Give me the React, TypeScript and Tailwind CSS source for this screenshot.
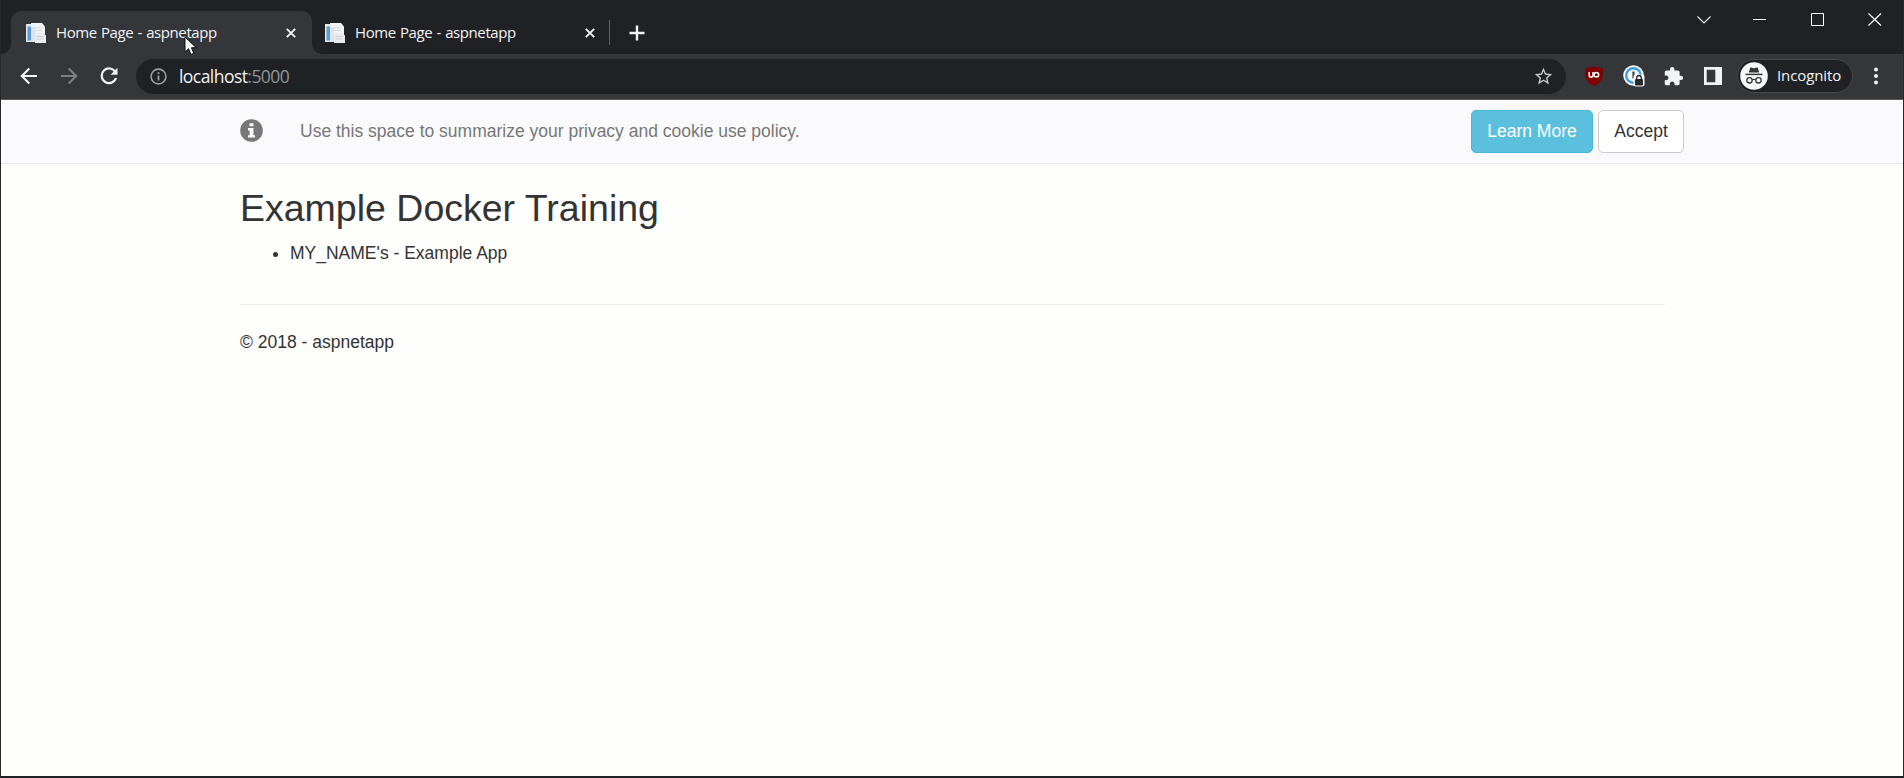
import React from "react";

function Favicon() {
  return (
    <svg width="20" height="20" viewBox="0 0 20 20" className="shrink-0">
      <path d="M0 1h5v18H0z" fill="#e4e9ee" />
      <path d="M1.500 3.500h4v14h-4z" fill="#5b9bd5" />
      <path d="M5 0h11l3 3.500V13H5z" fill="#f1f3f5" />
      <path d="M5 4h4v15H5z" fill="#dde5ec" />
      <path d="M8 5h8M8 7.500h8" stroke="#d5dbe1" strokeWidth="1" />
      <path d="M9 10h8l3 2.500V20H9z" fill="#e9ebee" />
      <path d="M10.500 13.500h7M10.500 16h7" stroke="#cdd3da" strokeWidth="1" />
    </svg>
  );
}

function CloseGlyph() {
  return (
    <svg width="10" height="10" viewBox="0 0 10 10" className="shrink-0">
      <path d="M.8.8l8.400 8.400M9.200.8L.8 9.200" stroke="#f1f3f4" strokeWidth="1.900" />
    </svg>
  );
}

function TabContent() {
  return (
    <>
      <Favicon />
      <span className="mb-[2px] ml-[10px] w-[230px] whitespace-nowrap text-[15px] leading-5 tracking-[-0.42px] text-[#f1f3f4] [word-spacing:0.8px]">
        Home Page - aspnetapp
      </span>
      <CloseGlyph />
    </>
  );
}

function TabStrip() {
  return (
    <div className="flex h-[54px] items-start justify-between bg-[#202124]">
      <div className="flex">
        <div className="flex h-[54px] items-end">
          <svg width="10" height="10" viewBox="0 0 10 10">
            <path d="M10 0v10H0A10 10 0 0 0 10 0z" fill="#35363a" />
          </svg>
          <div className="flex h-[43px] w-[301px] items-center rounded-t-[10px] bg-[#35363a] pl-[15px]">
            <TabContent />
          </div>
          <svg width="10" height="10" viewBox="0 0 10 10">
            <path d="M0 0v10h10A10 10 0 0 1 0 0z" fill="#35363a" />
          </svg>
        </div>
        <div className="mt-[11px] flex h-[43px] items-center pl-[3px]">
          <TabContent />
          <div className="ml-[14px] h-[25px] w-px bg-[#5f6165]" />
          <svg width="16" height="16" viewBox="0 0 16 16" className="ml-[19px]">
            <path d="M8 .5v15M.5 8h15" stroke="#f1f3f4" strokeWidth="2.400" />
          </svg>
        </div>
      </div>
      <div className="flex pr-[21px] pt-[12px]">
        <svg width="14" height="14" viewBox="0 0 14 14" className="mr-[42px]">
          <path d="M.5 4.500L7 11l6.500-6.500" fill="none" stroke="#e8eaed" strokeWidth="1.100" />
        </svg>
        <svg width="14" height="14" viewBox="0 0 14 14" className="mr-[44px]">
          <path d="M0 7.500h13" stroke="#fff" />
        </svg>
        <svg width="14" height="14" viewBox="0 0 14 14" className="mr-[43px]">
          <path d="M.5 1.500h12v12H.5z" fill="none" stroke="#fff" />
        </svg>
        <svg width="14" height="14" viewBox="0 0 14 14">
          <path d="M.5 1.500l12.500 12M13 1.500l-12.500 12" stroke="#fff" strokeWidth="1.200" />
        </svg>
      </div>
    </div>
  );
}

function Toolbar() {
  return (
    <div className="flex h-[46px] items-center border-b border-[#5a5a5d] bg-[#35363a] pb-[1px] pl-[19px]">
      <svg width="18" height="18" viewBox="0 0 18 18">
        <path d="M17 9H2M9.300 1.500L1.800 9l7.500 7.500" fill="none" stroke="#f1f3f4" strokeWidth="2.100" />
      </svg>
      <svg width="18" height="18" viewBox="0 0 18 18" className="ml-[22px]">
        <path d="M1 9h15M8.700 1.500L16.200 9l-7.500 7.500" fill="none" stroke="#7d7e82" strokeWidth="2.100" />
      </svg>
      <svg width="18" height="18" viewBox="0 0 18 18" className="ml-[22px]">
        <path d="M15.300 5A7.300 7.300 0 1 0 16 11" fill="none" stroke="#f1f3f4" strokeWidth="2.200" />
        <path d="M17.500.8v7h-7z" fill="#f1f3f4" />
      </svg>
      <div className="ml-[18px] mt-[1px] flex h-[35px] w-[1430px] items-center rounded-full bg-[#202124] pb-[1px] pl-[14px] pr-[12px]">
        <svg width="17" height="17" viewBox="0 0 17 17">
          <circle cx="8.500" cy="8.500" r="7.400" fill="none" stroke="#9aa0a6" strokeWidth="1.600" />
          <path d="M8.500 7.400v5M8.500 4.200v1.900" stroke="#9aa0a6" strokeWidth="1.800" />
        </svg>
        <div className="ml-[12px] flex-1 whitespace-nowrap text-[17.500px] leading-6 tracking-[-0.55px] text-[#f1f3f4]">
          localhost<span className="text-[#8f9498]">:5000</span>
        </div>
        <svg width="21" height="21" viewBox="0 0 24 24">
          <path
            d="M22 9.240l-7.190-.62L12 2 9.190 8.630 2 9.240l5.460 4.730L5.820 21 12 17.270 18.180 21l-1.630-7.030zM12 15.400l-3.760 2.270 1-4.280-3.320-2.880 4.380-.38L12 6.100l1.710 4.040 4.380.38-3.320 2.880 1 4.280z"
            fill="#c4c7cb"
          />
        </svg>
      </div>
      <svg width="18" height="20" viewBox="0 0 18 20" className="ml-[19px] shrink-0">
        <path d="M9 0c2.500 1.500 5.500 2 8.800 2.200V9c0 5-3.500 8.500-8.800 11C3.700 17.500.2 14 .2 9V2.200C3.500 2 6.500 1.500 9 0z" fill="#800000" />
        <path d="M4.200 6v3.200a1.900 1.900 0 0 0 3.800 0V6" fill="none" stroke="#fff" strokeWidth="1.500" />
        <circle cx="11.400" cy="8.700" r="2.300" fill="none" stroke="#fff" strokeWidth="1.500" />
      </svg>
      <svg width="22" height="22" viewBox="0 0 22 22" className="ml-[20px] shrink-0">
        <circle cx="10.500" cy="10.500" r="10.300" fill="#f8f9fa" />
        <circle cx="10.500" cy="10.500" r="7.300" fill="none" stroke="#3b9fe0" strokeWidth="2.400" />
        <path d="M10.500 6.500v7" stroke="#3c4043" strokeWidth="2.200" />
        <rect x="10.500" y="9.500" width="11" height="12" rx="2.500" fill="#f8f9fa" />
        <rect x="12" y="14" width="8" height="6.500" rx="1" fill="#27282b" />
        <path d="M13.700 14.500v-1.700a2.300 2.300 0 0 1 4.600 0v1.700" fill="none" stroke="#27282b" strokeWidth="1.300" />
      </svg>
      <svg width="21" height="21" viewBox="0 0 24 24" className="ml-[18px] shrink-0">
        <path
          d="M20.500 11H19V7c0-1.100-.9-2-2-2h-4V3.500a2.500 2.500 0 0 0-5 0V5H4c-1.100 0-1.990.9-1.990 2v3.800H3.500c1.490 0 2.700 1.210 2.700 2.700s-1.210 2.700-2.700 2.700H2V20c0 1.100.9 2 2 2h3.800v-1.500c0-1.490 1.210-2.700 2.700-2.700s2.700 1.210 2.700 2.700V22H17c1.100 0 2-.9 2-2v-4h1.500a2.500 2.500 0 0 0 0-5z"
          fill="#f1f3f4"
        />
      </svg>
      <svg width="18" height="18" viewBox="0 0 18 18" className="ml-[20px] shrink-0">
        <path d="M0 0h18v18H0zM2.700 2.700v12.600h8.600V2.700z" fill="#f1f3f4" fillRule="evenodd" />
      </svg>
      <div className="ml-[15px] flex h-[34px] w-[116px] shrink-0 items-center rounded-full border border-[#47484c] bg-[#202124] pl-[2px]">
        <svg width="28" height="28" viewBox="0 0 28 28" className="shrink-0">
          <circle cx="14" cy="14" r="13.800" fill="#f8f9fa" />
          <path d="M10.300 5.500c1.400 0 2.200.7 3.700.7s2.300-.7 3.700-.7l1.500 5H8.800z" fill="#35363a" />
          <path d="M5.500 12.400h17" stroke="#35363a" strokeWidth="1.500" />
          <circle cx="9.500" cy="18.300" r="2.700" fill="none" stroke="#35363a" strokeWidth="1.300" />
          <circle cx="18.500" cy="18.300" r="2.700" fill="none" stroke="#35363a" strokeWidth="1.300" />
          <path d="M12.200 17.800q1.800-1 3.600 0" fill="none" stroke="#35363a" strokeWidth="1.200" />
        </svg>
        <span className="mb-[2px] ml-[9px] text-[15px] leading-5 tracking-[-0.1px] text-[#f1f3f4]">Incognito</span>
      </div>
      <svg width="4" height="18" viewBox="0 0 4 18" className="ml-[21px] shrink-0">
        <circle cx="2" cy="2.500" r="2" fill="#f1f3f4" />
        <circle cx="2" cy="9" r="2" fill="#f1f3f4" />
        <circle cx="2" cy="15.500" r="2" fill="#f1f3f4" />
      </svg>
    </div>
  );
}

function CookieBanner() {
  return (
    <div className="flex h-[64px] items-center border-b border-[#e7e7e7] bg-[#fafafc] pb-[1px] pl-[239px] pr-[219px]">
      <svg width="23" height="23" viewBox="0 0 23 23" className="mb-[2px] shrink-0">
        <circle cx="11.500" cy="11.500" r="11.300" fill="#777" />
        <path d="M9.500 4.200h4v3h-4zM8 9h5.500v7.200H15v2.400H8v-2.400h1.600v-4.800H8z" fill="#fafafc" />
      </svg>
      <p className="ml-[37px] flex-1 whitespace-nowrap text-[17.500px] leading-[25px] text-[#777]">
        Use this space to summarize your privacy and cookie use policy.
      </p>
      <button className="h-[43px] w-[122px] rounded-[5px] border border-[#46b8da] bg-[#5bc0de] text-[17.500px] leading-[25px] text-white">
        Learn More
      </button>
      <button className="ml-[5px] h-[43px] w-[86px] rounded-[5px] border border-[#ccc] bg-white text-[17.500px] leading-[25px] text-[#333]">
        Accept
      </button>
    </div>
  );
}

export default function App() {
  return (
    <div className="relative flex h-[778px] w-[1904px] flex-col overflow-hidden border-x border-[#27282b] bg-[#fefefd] font-['Open_Sans','Noto_Sans',sans-serif]">
      <TabStrip />
      <Toolbar />
      <div className="flex flex-1 flex-col font-['Liberation_Sans',Arial,sans-serif] text-[17.500px] leading-[25px] text-[#333]">
        <CookieBanner />
        <main className="ml-[239px] w-[1425px] pt-[24px]">
          <h2 className="whitespace-nowrap text-[37.500px] leading-[41px]">Example Docker Training</h2>
          <ul className="mt-[12px] list-disc pl-[50px]">
            <li>MY_NAME's - Example App</li>
          </ul>
          <hr className="mt-[38px] border-[#eee]" />
          <footer className="mt-[25px]">&copy; 2018 - aspnetapp</footer>
        </main>
      </div>
      <div className="h-[2px] bg-[#202124]" />
      <svg width="14" height="20" viewBox="0 0 14 20" className="absolute left-[183px] top-[36px]">
        <path d="M1 1v15l3.600-3.300L7 18.500l2.800-1.200-2.400-5.600h4.800z" fill="#fff" stroke="#111" strokeWidth="1" />
      </svg>
    </div>
  );
}
